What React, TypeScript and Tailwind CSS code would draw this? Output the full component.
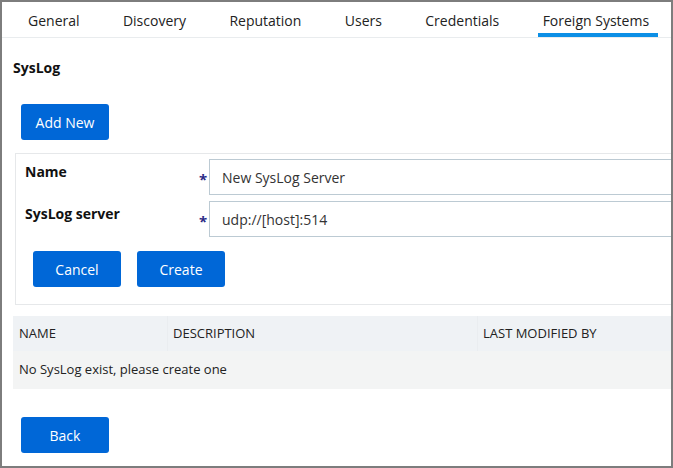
const tabs = ['General', 'Discovery', 'Reputation', 'Users', 'Credentials', 'Foreign Systems']

function BlueButton({ label }: { label: string }) {
  return (
    <button className="h-[36px] w-[88px] rounded-[3px] bg-[#0067d7] text-[14px] text-white">
      {label}
    </button>
  )
}

function FieldRow({ label, value }: { label: string; value: string }) {
  return (
    <div className="flex">
      <div className="w-[172px] pt-[3px] text-[14px] leading-[20px] font-bold text-[#111]">{label}</div>
      <div className="w-[12px] pt-[10px] text-center text-[15px] leading-[20px] font-bold text-[#2b2a86]">*</div>
      <input
        readOnly
        value={value}
        className="h-[36px] flex-1 border border-[#bccad3] bg-white px-[12px] text-[14px] text-[#333] outline-none"
      />
    </div>
  )
}

export default function App() {
  return (
    <div
      className="h-[468px] w-[673px] overflow-hidden border-2 border-[#7d7d7d] bg-white text-[#333]"
      style={{ fontFamily: '"Open Sans", "Liberation Sans", sans-serif' }}
    >
      <div className="flex gap-[33.4px] border-b border-[#e9ecee] pl-[21px]">
        {tabs.map((t) => (
          <div
            key={t}
            className={
              t === 'Foreign Systems'
                ? 'border-b-4 border-[#0c8fe6] pt-[9px] pr-[9px] pb-[2px] pl-[5px] text-[14px] leading-[20px] text-[#222]'
                : 'border-b-4 border-transparent px-[5px] pt-[9px] pb-[2px] text-[14px] leading-[20px] text-[#222]'
            }
          >
            {t}
          </div>
        ))}
      </div>

      <div className="w-[760px] pl-[11px]">
        <h2 className="mt-[20px] text-[14px] leading-[20px] font-bold text-[#111]">SysLog</h2>

        <div className="mt-[26px] ml-[8px]">
          <BlueButton label="Add New" />
        </div>

        <div className="mt-[13px] ml-[2px] border border-[#e6e8ea] px-[9px] pt-[5px] pb-[17px]">
          <div className="flex flex-col gap-[6px]">
            <FieldRow label="Name" value="New SysLog Server" />
            <FieldRow label="SysLog server" value="udp://[host]:514" />
          </div>
          <div className="mt-[14px] ml-[8px] flex gap-[16px]">
            <BlueButton label="Cancel" />
            <BlueButton label="Create" />
          </div>
        </div>

        <div className="mt-[11px]">
          <div className="flex h-[35px] items-center bg-[#eff2f5] text-[13px] text-[#222]">
            <div className="flex h-full w-[155px] items-center border-r border-[#eaedf0] px-[6px]">NAME</div>
            <div className="flex h-full w-[310px] items-center border-r border-[#eaedf0] px-[5px]">DESCRIPTION</div>
            <div className="flex h-full flex-1 items-center px-[5px]">LAST MODIFIED BY</div>
          </div>
          <div className="flex h-[38px] items-center bg-[#f3f4f4] px-[6px] text-[13px] text-[#222]">
            No SysLog exist, please create one
          </div>
        </div>

        <div className="mt-[28px] ml-[8px]">
          <BlueButton label="Back" />
        </div>
      </div>
    </div>
  )
}
